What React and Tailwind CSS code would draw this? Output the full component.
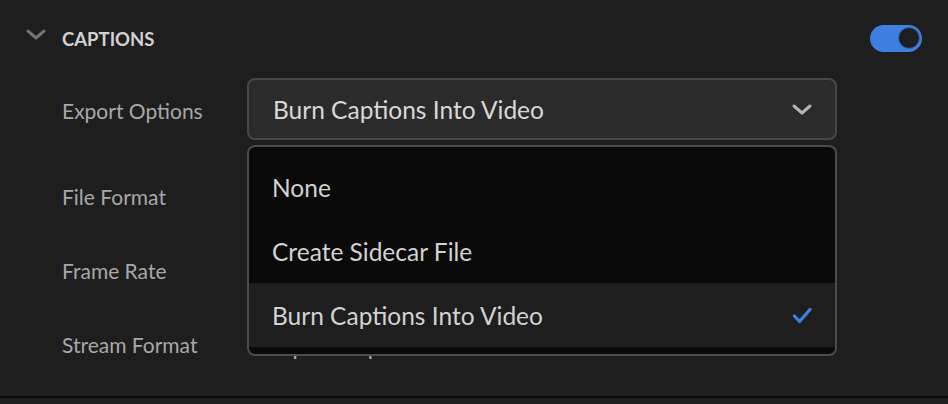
import React from "react";

const font = { fontFamily: "Lato, 'Open Sans', sans-serif" };

const Chevron = ({ className }) => (
  <svg viewBox="0 0 20 11" className={className} fill="none">
    <path d="M2 2l8 7 8-7" stroke="currentColor" strokeWidth="3" strokeLinecap="round" strokeLinejoin="round" />
  </svg>
);

const Check = () => (
  <svg viewBox="0 0 20 17" className="w-[20px] h-[17px] text-[#3f7fe2]" fill="none">
    <path d="M2.5 9l5 5.5L18 2.5" stroke="currentColor" strokeWidth="3.2" strokeLinecap="round" strokeLinejoin="round" />
  </svg>
);

const options = ["None", "Create Sidecar File", "Burn Captions Into Video"];

export default function App() {
  const selected = "Burn Captions Into Video";

  return (
    <div className="w-[948px] h-[404px] bg-[#1e1e1e] flex flex-col overflow-hidden" style={font}>
      <div className="flex-1 pt-[24px] pl-[26px] pr-[26px]">
        {/* section header */}
        <div className="flex items-center h-[28px]">
          <Chevron className="w-[20px] h-[11px] text-[#727272] -mt-[8px]" />
          <span className="ml-[16px] text-[18.5px] font-bold text-[#d2d2d2] mt-[4px]">CAPTIONS</span>
          <div className="ml-auto w-[52px] h-[27px] rounded-full bg-[#3f7fe2] flex items-center justify-end pr-[2px]">
            <div className="w-[22px] h-[22px] rounded-full bg-[#1e1e1e] border-[1px] border-[#2f67c0]" />
          </div>
        </div>

        {/* export options */}
        <div className="flex items-center mt-[26px] h-[62px]">
          <span className="w-[221px] pl-[36px] pt-[3px] text-[21px] text-[#a8a8a8]">Export Options</span>
          <div className="relative w-[590px] h-[62px]">
            <div className="h-full rounded-[8px] border-2 border-[#474747] bg-[#2b2b2b] flex items-center pl-[24px] pr-[23px]">
              <span className="pt-[3px] text-[24.5px] text-[#d8d8d8]">{selected}</span>
              <Chevron className="ml-auto w-[20px] h-[11px] text-[#b4b4b4]" />
            </div>

            {/* open menu */}
            <div className="absolute z-10 left-0 right-0 top-[67px] h-[211px] rounded-[8px] border-2 border-[#4b4b4b] bg-[#0a0a0a] py-[8px] overflow-hidden">
              {options.map((o) => (
                <div
                  key={o}
                  className={`h-[64px] flex items-center pl-[23px] pr-[23px] ${o === selected ? "bg-[#1e1e1e]" : ""}`}
                >
                  <span className="pt-[2px] text-[24.5px] text-[#d2d2d2]">{o}</span>
                  {o === selected && <span className="ml-auto"><Check /></span>}
                </div>
              ))}
            </div>
          </div>
        </div>

        {/* remaining fields, mostly under the menu */}
        <div className="mt-[20px]">
          {["File Format", "Frame Rate", "Stream Format"].map((l) => (
            <div key={l} className="flex items-center h-[74px]">
              <span className="w-[221px] pl-[36px] text-[21px] text-[#a8a8a8]">{l}</span>
              {l === "Stream Format" && (
                <span className="pl-[26px] text-[24.5px] text-[#a8a8a8] mt-[2px]">Open Captions</span>
              )}
            </div>
          ))}
        </div>
      </div>
      <div className="h-[2px] bg-[#0b0b0b]" />
      <div className="h-[6px] bg-[#1f1f1f]" />
    </div>
  );
}
